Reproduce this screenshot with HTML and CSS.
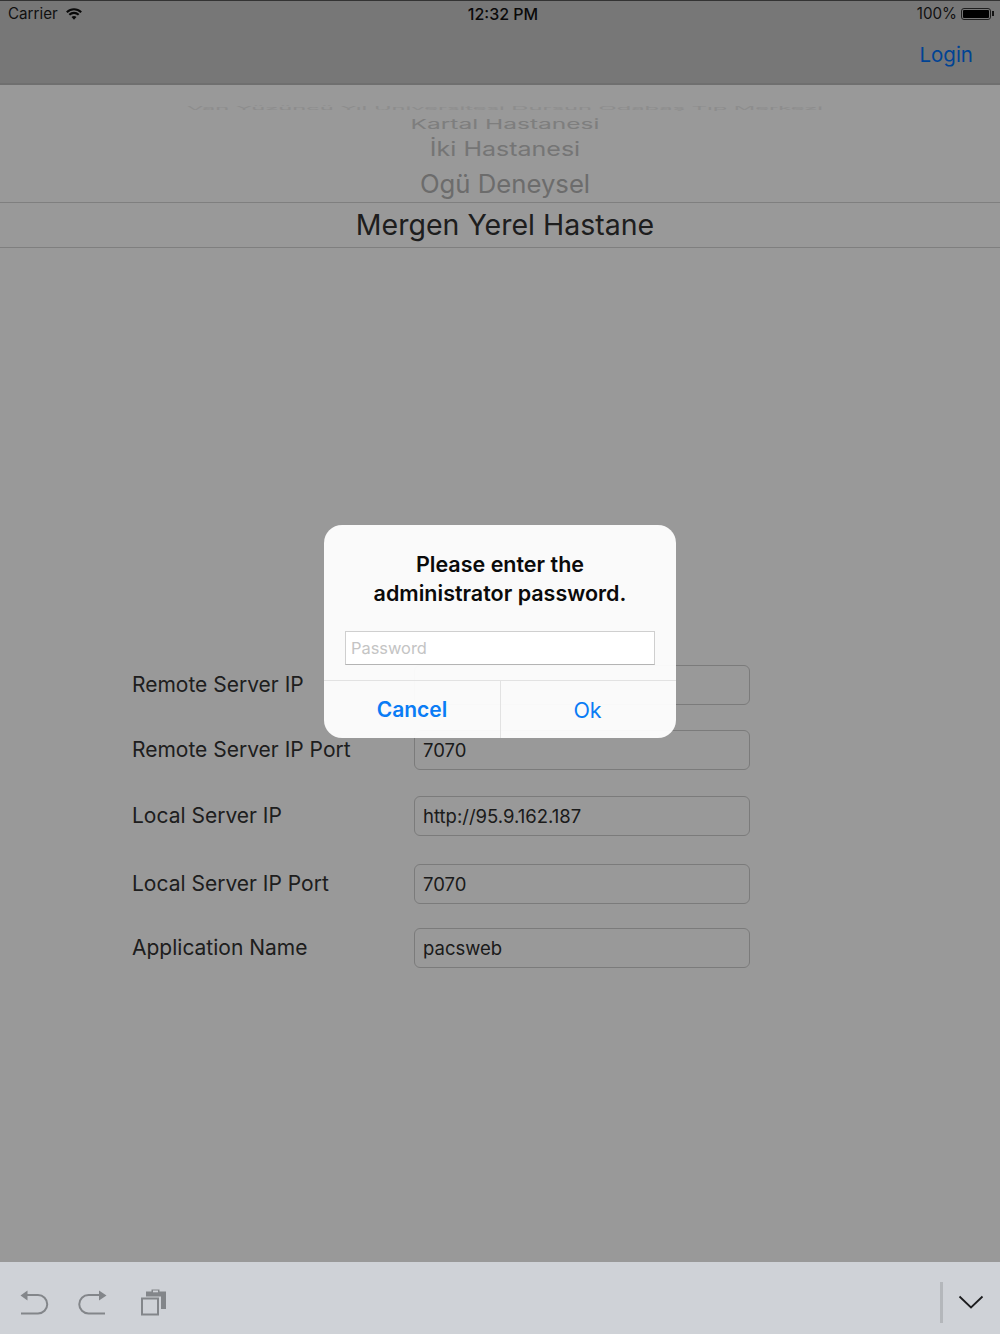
FILE: index.html
```html
<!DOCTYPE html>
<html lang="tr">
<head>
<meta charset="utf-8">
<title>Settings</title>
<link rel="stylesheet" href="styles.css">
</head>
<body>
<div class="screen">
  <main class="stage">
    <header class="topbar">
      <div class="status">
        <div class="status-left">
          <span>Carrier</span>
          <svg class="wifi" width="16" height="12" viewBox="0 0 16 12"><path d="M.8 4.300C5 .3 11 .3 15.200 4.300" fill="none" stroke="#111" stroke-width="2.100"/><path d="M3.300 6.800C6 4.200 10 4.200 12.700 6.800" fill="none" stroke="#111" stroke-width="2.100"/><path d="M5.500 8.900 8 11.700l2.500-2.800C9 7.700 7 7.700 5.500 8.900z" fill="#111"/></svg>
        </div>
        <div class="status-time">12:32 PM</div>
        <div class="status-right">
          <span>100%</span>
          <span class="battery"><span class="battery-fill"></span></span>
          <span class="battery-cap"></span>
        </div>
      </div>
      <nav class="navrow"><a class="login">Login</a></nav>
    </header>

    <section class="picker">
      <div class="pick pick-far">Van Yüzüncü Yıl Üniversitesi Dursun Odabaş Tıp Merkezi</div>
      <div class="pick pick-3">Kartal Hastanesi</div>
      <div class="pick pick-2">İki Hastanesi</div>
      <div class="pick pick-1">Ogü Deneysel</div>
      <div class="pick pick-current">Mergen Yerel Hastane</div>
    </section>

    <form class="form">
      <div class="row row-a"><label>Remote Server IP</label><div class="field"></div></div>
      <div class="row row-b"><label>Remote Server IP Port</label><div class="field">7070</div></div>
      <div class="row row-c"><label>Local Server IP</label><div class="field">http://95.9.162.187</div></div>
      <div class="row row-d"><label>Local Server IP Port</label><div class="field">7070</div></div>
      <div class="row row-e"><label>Application Name</label><div class="field">pacsweb</div></div>
    </form>

    <div class="scrim"></div>

    <div class="alert">
      <div class="alert-title">Please enter the<br>administrator password.</div>
      <div class="alert-input">Password</div>
      <div class="alert-actions">
        <div class="alert-btn alert-cancel">Cancel</div>
        <div class="alert-btn alert-ok">Ok</div>
      </div>
    </div>
  </main>

  <footer class="toolbar">
    <div class="tools">
      <svg class="tool" width="30" height="30" viewBox="0 0 30 30"><path d="M7 7H19a9.250 9.250 0 0 1 0 18.500H2" fill="none" stroke="#83868a" stroke-width="2"/><path d="M1.500 7.500 8.500 2.500v10z" fill="#83868a"/></svg>
      <svg class="tool" width="30" height="30" viewBox="0 0 30 30"><path d="M21 7H10.500a9.250 9.250 0 0 0 0 18.500H27" fill="none" stroke="#83868a" stroke-width="2"/><path d="M28.500 7.500 21 2.500v10z" fill="#83868a"/></svg>
      <svg class="tool" width="30" height="30" viewBox="0 0 30 30"><rect x="5" y="10.500" width="16" height="16" fill="none" stroke="#83868a" stroke-width="2"/><path d="M9 8.500V3.500h5.500V1.500h8v2H29V21h-5V8.500z" fill="#83868a"/><rect x="16" y="2.500" width="5" height="1.800" fill="#cfd2d7"/></svg>
    </div>
    <div class="divider"></div>
    <svg class="chevron" width="26" height="16" viewBox="0 0 26 16"><path d="M1.500 2.500 13 13.500 24.500 2.500" fill="none" stroke="#1c1c1e" stroke-width="1.800"/></svg>
  </footer>
</div>
</body>
</html>
```
FILE: styles.css
```css
* { box-sizing: border-box; }
html, body { margin: 0; padding: 0; }
body { width: 1000px; height: 1334px; overflow: hidden; font-family: Inter, "Liberation Sans", sans-serif; color: #111; background: #fff; }
.screen { display: flex; flex-direction: column; height: 1334px; }
.stage { position: relative; height: 1262px; background: #fff; overflow: hidden; }

.topbar { height: 85px; background: #c7c7c7; border-top: 1px solid #555; border-bottom: 2px solid #bababa; }
.status { display: grid; grid-template-columns: 1fr auto 1fr; align-items: center; height: 25px; padding: 0 6px 0 8px; font-size: 15.2px; }
.status-left { display: flex; align-items: center; gap: 8px; color: #1c1c1c; }
.wifi { margin-top: 1px; }
.status-time { font-size: 16px; font-weight: 500; position: relative; left: 2px; }
.status-right { display: flex; align-items: center; justify-content: flex-end; color: #1c1c1c; }
.battery { width: 30px; height: 12px; margin-left: 4px; border: 1px solid #333; border-radius: 3px; padding: 1px; display: flex; }
.battery-fill { flex: 1; background: #000; border-radius: 1px; }
.battery-cap { width: 2px; height: 5px; background: #222; margin-left: 1px; }
.navrow { display: flex; justify-content: flex-end; padding: 5px 27px 0 0; }
.login { font-size: 20.5px; color: #0070f5; line-height: 48px; }

.picker { height: 163px; padding-top: 19px; display: flex; flex-direction: column; align-items: center; position: relative; text-align: center; }
.pick { white-space: nowrap; position: relative; left: 5px; }
.pick-far { font-size: 23.7px; line-height: 9px; height: 9px; transform: scaleY(.22); color: #ebebeb; }
.pick-3 { font-size: 24.5px; line-height: 18px; height: 18px; margin-top: 2px; transform: scaleY(.56); color: #d2d2d2; }
.pick-2 { font-size: 25px; line-height: 30px; height: 30px; margin-top: 1px; transform: scaleY(.8); color: #c4c4c4; }
.pick-1 { font-size: 25.7px; line-height: 36px; height: 36px; margin-top: 2px; color: #b4b4b4; }
.pick-current { font-size: 28.500px; line-height: 44px; height: 46px; width: 1000px; left: 0; padding-left: 10px; border-top: 1px solid #d4d4d4; border-bottom: 1px solid #d4d4d4; color: #333; }

.form { padding: 417px 0 0 132px; }
.row { display: flex; align-items: center; height: 40px; }
.row label { width: 282px; font-size: 21px; padding-bottom: 2px; color: #333; }
.field { width: 336px; height: 40px; border: 1px solid #cdcdcd; border-radius: 6px; padding-left: 8px; font-size: 18.500px; line-height: 38px; color: #2e2e2e; }
.row-b { margin-top: 25px; }
.row-c { margin-top: 26px; }
.row-d { margin-top: 28px; }
.row-e { margin-top: 24px; }

.scrim { position: absolute; inset: 0; background: rgba(0, 0, 0, .4); }

.alert { position: absolute; left: 324px; top: 525px; width: 352px; height: 213px; border-radius: 18px; background: rgba(255, 255, 255, .95); display: flex; flex-direction: column; }
.alert-title { padding-top: 25px; text-align: center; font-size: 21.500px; line-height: 29px; font-weight: 600; color: #0a0a0a; }
.alert-input { margin: 23px 21px 0; height: 34px; background: #fff; border: 1px solid #cfcfcf; border-bottom-color: #b4b4b4; padding-left: 5px; font-size: 16.400px; line-height: 32px; color: #c4c4c4; }
.alert-actions { display: flex; margin-top: 15px; height: 58px; border-top: 1px solid #e2e2e2; }
.alert-btn { display: flex; align-items: center; justify-content: center; font-size: 21.500px; color: #0a7cf5; }
.alert-cancel { width: 177px; font-size: 21px; font-weight: 600; border-right: 1px solid #e2e2e2; }
.alert-ok { flex: 1; padding-right: 2px; }

.toolbar { height: 72px; background: #cfd2d7; display: flex; align-items: center; padding: 0 16px 0 19px; }
.tools { display: flex; gap: 29px; margin-top: 10px; }
.tool { display: block; }
.divider { width: 3px; height: 41px; background: #b4b7bb; margin-left: auto; margin-top: 8px; }
.chevron { margin-left: 15px; margin-top: 8px; }
```
